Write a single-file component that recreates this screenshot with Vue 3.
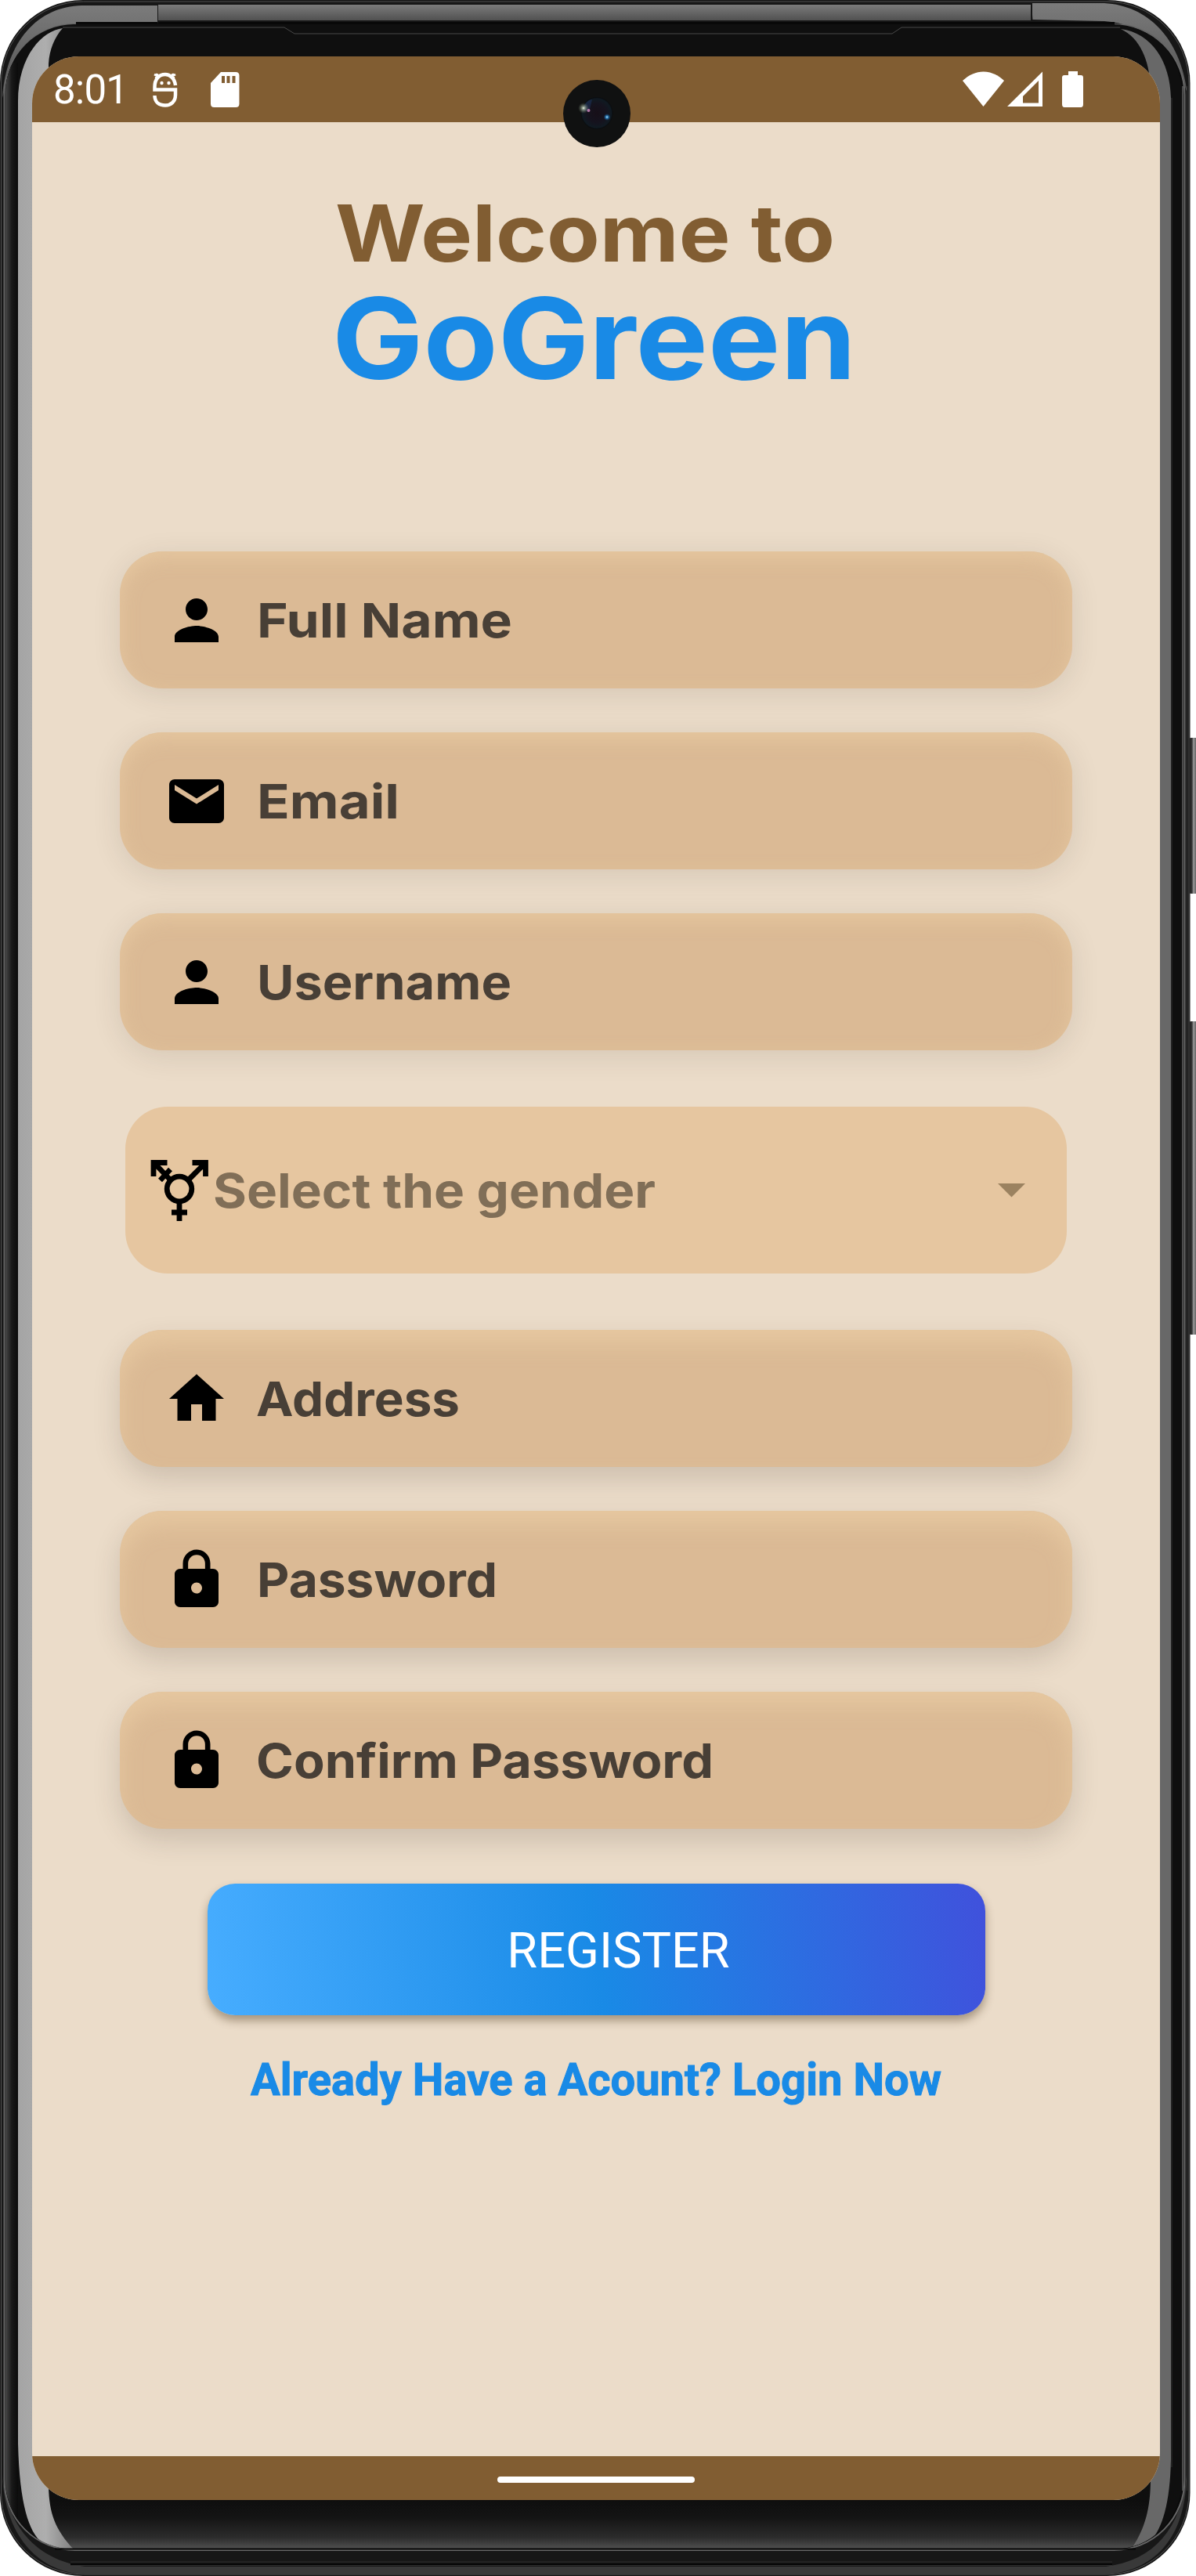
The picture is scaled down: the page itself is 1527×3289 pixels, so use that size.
<script setup>
const icons = {
  person: 'M12 12c2.21 0 4-1.79 4-4s-1.79-4-4-4-4 1.79-4 4 1.79 4 4 4zm0 2c-2.67 0-8 1.34-8 4v2h16v-2c0-2.66-5.33-4-8-4z',
  email: 'M20 4H4c-1.1 0-1.99.9-1.99 2L2 18c0 1.1.9 2 2 2h16c1.1 0 2-.9 2-2V6c0-1.1-.9-2-2-2zm0 4l-8 5-8-5V6l8 5 8-5v2z',
  home: 'M10 20v-6h4v6h5v-8h3L12 3 2 12h3v8z',
  lock: 'M18 8h-1V6c0-2.76-2.24-5-5-5S7 3.24 7 6v2H6c-1.1 0-2 .9-2 2v10c0 1.1.9 2 2 2h12c1.1 0 2-.9 2-2V10c0-1.1-.9-2-2-2zm-6 9c-1.1 0-2-.9-2-2s.9-2 2-2 2 .9 2 2-.9 2-2 2zm3.1-9H8.9V6c0-1.71 1.39-3.1 3.1-3.1s3.1 1.39 3.1 3.1v2z'
}
const topFields = [
  { label: 'Full Name', icon: 'person', x: -1, length: 326, depth: 'low' },
  { label: 'Email', icon: 'email', x: -1, length: 182, depth: 'low' },
  { label: 'Username', icon: 'person', x: -1, length: 325, depth: 'low' }
]
const bottomFields = [
  { label: 'Address', icon: 'home', x: -2, length: 260, depth: 'high' },
  { label: 'Password', icon: 'lock', x: -1, length: 307, depth: 'high' },
  { label: 'Confirm Password', icon: 'lock', x: -2, length: 584, depth: 'high' }
]
</script>

<template>
  <main class="device">
    <svg class="frame" width="1527" height="3289" viewBox="0 0 1527 3289">
      <defs>
        <linearGradient id="rail" x1="0" y1="0" x2="0" y2="1">
          <stop offset="0" stop-color="#7b7b7b" /><stop offset="1" stop-color="#515151" />
        </linearGradient>
        <linearGradient id="chin" x1="0" y1="0" x2="0" y2="1">
          <stop offset="0" stop-color="#0e0e0e" /><stop offset=".35" stop-color="#141414" />
          <stop offset=".75" stop-color="#2c2c2c" /><stop offset="1" stop-color="#555" />
        </linearGradient>
        <linearGradient id="edgeLeft" x1="0" y1="0" x2="1" y2="0">
          <stop offset="0" stop-color="#484848" /><stop offset=".5" stop-color="#181818" /><stop offset="1" stop-color="#0b0b0b" />
        </linearGradient>
        <linearGradient id="shineLeft" x1="0" y1="0" x2="1" y2="0">
          <stop offset="0" stop-color="#a4a4a4" /><stop offset=".5" stop-color="#aeaeae" /><stop offset="1" stop-color="#808080" />
        </linearGradient>
        <linearGradient id="key" x1="0" y1="0" x2="1" y2="0">
          <stop offset="0" stop-color="#222" /><stop offset=".35" stop-color="#333" />
          <stop offset=".48" stop-color="#999" /><stop offset=".75" stop-color="#5c5c5c" />
        </linearGradient>
        <clipPath id="glass"><rect x="7" y="31" width="1502" height="3224" rx="88" /></clipPath>
      </defs>
      <rect x="1517" y="942" width="14" height="199" rx="4" fill="url(#key)" />
      <rect x="1517" y="1304" width="14" height="400" rx="4" fill="url(#key)" />
      <rect width="1519.500" height="3289" rx="106" fill="#171717" />
      <rect x="1.500" y="2" width="1516.500" height="3285" rx="105" fill="none" stroke="#505050" />
      <path d="M108 3277H1412C1474 3269 1508 3228 1515 3160C1514 3243 1472 3283 1411 3287H108C45 3283 6 3234 3 3160C9 3225 46 3268 108 3277Z" fill="#393939" />
      <path d="M90 3271H1420M90 3275.500H1420" fill="none" stroke="#303030" />
      <path d="M90 3274H1420" fill="none" stroke="#070707" stroke-width="2" />
      <path d="M201 7H105C48 8 8 53 3 125C20 65 52 33 105 29L201 29Z" fill="url(#rail)" />
      <rect x="202" y="6" width="1114" height="20" fill="url(#rail)" />
      <path d="M1318 4H1410C1465 7 1507 48 1516 119C1498 64 1460 30 1410 27L1318 25Z" fill="url(#rail)" />
      <rect x="5.500" y="31" width="1507" height="3225" rx="90" fill="#0b0b0b" stroke="#666" stroke-width="2" />
      <path d="M97 30.500H1423" stroke="#080808" stroke-width="5" />
      <g clip-path="url(#glass)">
        <rect x="7" y="31" width="1502" height="3224" fill="#0f0f0f" />
        <rect x="55" y="3192" width="1420" height="64" fill="url(#chin)" />
        <rect x="7" y="80" width="16" height="3140" fill="url(#edgeLeft)" />
        <path d="M80 36C55 39 23 70 23 130V3120C25 3198 37 3232 53 3246C65 3253 80 3255 94 3255C70 3229 63 3209 62 3175V82C63 63 70 47 80 36Z" fill="url(#shineLeft)" />
        <path d="M1431 37C1470 42 1494 78 1495 125V3140C1494 3195 1484 3230 1468 3245L1446 3252C1462 3228 1469 3202 1469 3165V110C1467 77 1456 49 1431 37Z" fill="#686868" />
      </g>
      <path d="M376 43L363 35H80M376 43H1139L1151 35H1430" fill="none" stroke="#484848" />
      <path d="M1496 125V3150M1515.500 110V3180" stroke="#353535" />
      <path d="M1510 110V3180" stroke="#4b4b4b" stroke-width="2" />
      <path d="M201.500 7V30M1316.500 4L1318 26" stroke="#171717" />
      <path d="M70 3254.500H1450" stroke="#070707" stroke-width="2" />
    </svg>

    <section class="screen">
      <header class="status">
        <div class="status-left">
          <span class="clock">8:01</span>
          <svg class="bug" width="32" height="46" viewBox="0 0 32 46" fill="none" stroke="#fff" stroke-width="4.500">
            <path d="M29 17C28 8 22 3 16 3C8 3 2.500 9 2.500 19V22.500H29V29C29 38 23 42.500 16 42.500C8 42.500 2.500 38 2.500 30" />
            <path d="M8 6L2 3M4 8L6 2M23 6L29 3M27 8L25 2" stroke-width="3" />
            <circle cx="11.500" cy="14" r="2.200" fill="#fff" stroke="none" /><circle cx="20.500" cy="14" r="2.200" fill="#fff" stroke="none" />
          </svg>
          <svg class="sd" width="37" height="45" viewBox="0 0 37 45">
            <path fill="#fff" fill-rule="evenodd" d="M13 0H32Q36.500 0 36.500 4.500V40.500Q36.500 45 32 45H4.500Q0 45 0 40.500V14ZM14 5V14H18V5ZM20.500 5V14H24.500V5ZM27.500 5V14H31.500V5Z" />
          </svg>
        </div>
        <svg class="signals" width="155" height="46" viewBox="0 0 155 46" fill="#fff">
          <path d="M0 12C16-3.500 37-3.500 53 12L26.500 45Z" />
          <path fill-rule="evenodd" d="M57 45L102 .5V45ZM77 40.500H97V12L77 32Z" />
          <path d="M135 0H147V5H151Q154 5 154 8V42Q154 46 151 46H130Q127 46 127 42V8Q127 5 130 5H135Z" />
        </svg>
      </header>

      <svg class="camera" width="88" height="88" viewBox="0 0 88 88">
        <defs>
          <radialGradient id="lens"><stop offset="0" stop-color="#170f18" /><stop offset=".6" stop-color="#15131e" /><stop offset=".9" stop-color="#101a22" /><stop offset="1" stop-color="#090a0c" /></radialGradient>
          <radialGradient id="flare"><stop offset="0" stop-color="#f4ffe9" /><stop offset=".25" stop-color="#aab7a5" stop-opacity=".8" /><stop offset="1" stop-color="#56634f" stop-opacity="0" /></radialGradient>
          <radialGradient id="blue"><stop offset="0" stop-color="#b6e9ff" /><stop offset=".4" stop-color="#2773ad" /><stop offset="1" stop-color="#153e6c" stop-opacity="0" /></radialGradient>
        </defs>
        <circle cx="44" cy="44" r="43" fill="#101111" />
        <circle cx="44" cy="43.500" r="20.500" fill="url(#lens)" />
        <path d="M26 39C28 30 34 26 38 26L34 42Z" fill="#263d74" opacity=".4" />
        <circle cx="27" cy="37" r="7" fill="url(#flare)" />
        <circle cx="33.500" cy="40" r="2" fill="#b276a6" />
        <circle cx="57" cy="48.500" r="4.500" fill="url(#blue)" />
      </svg>

      <div class="content">
        <h1 class="title">
          <svg width="660" height="118" viewBox="0 0 660 118"><text class="welcome" x="-5" y="112" textLength="638" lengthAdjust="spacingAndGlyphs">Welcome to</text></svg>
          <svg width="660" height="150" viewBox="0 0 660 150"><text class="brand" x="-9" y="144" textLength="669" lengthAdjust="spacingAndGlyphs">GoGreen</text></svg>
        </h1>

        <form class="form" @submit.prevent>
          <div v-for="field in topFields" :key="field.label" class="field" :class="field.depth">
            <svg width="84" height="84" viewBox="0 0 24 24"><path :d="icons[field.icon]" /></svg>
            <svg width="640" height="84" viewBox="0 0 640 84"><text class="label" :x="field.x" y="64" :textLength="field.length" lengthAdjust="spacingAndGlyphs">{{ field.label }}</text></svg>
          </div>

          <div class="select">
            <svg width="76" height="80" viewBox="0 0 76 80" fill="none" stroke="#000" stroke-width="6.800">
              <circle cx="38" cy="38" r="15.800" />
              <path d="M38 54V79M28 68H48M50 26L71 5M54.500 4.500H71.500V22M27 27L6 5M22.500 4.500H5V22M26.500 13L13.500 27" />
            </svg>
            <svg width="640" height="84" viewBox="0 0 640 84"><text class="label hint" x="1" y="64" textLength="565" lengthAdjust="spacingAndGlyphs">Select the gender</text></svg>
            <svg class="arrow" width="35" height="18" viewBox="0 0 35 18"><path d="M0 0H35L17.500 17.500Z" fill="#9b8260" /></svg>
          </div>

          <div v-for="field in bottomFields" :key="field.label" class="field" :class="field.depth">
            <svg width="84" height="84" viewBox="0 0 24 24"><path :d="icons[field.icon]" /></svg>
            <svg width="640" height="84" viewBox="0 0 640 84"><text class="label" :x="field.x" y="64" :textLength="field.length" lengthAdjust="spacingAndGlyphs">{{ field.label }}</text></svg>
          </div>

          <button class="register" type="submit">REGISTER</button>
        </form>
        <svg class="login" width="884" height="76" viewBox="0 0 884 76"><text x="1" y="56" textLength="882" lengthAdjust="spacingAndGlyphs">Already Have a Acount? Login Now</text></svg>
      </div>

      <footer class="nav"><span class="handle"></span></footer>
    </section>
  </main>
</template>

<style>
html, body { background: #fff; }
</style>

<style scoped>
.device { width: 1527px; height: 3289px; display: grid; overflow: hidden; }
.frame, .screen { grid-area: 1 / 1; }
.frame, .screen svg { display: block; }
.screen {
  position: relative;
  margin: 72px 0 0 41px;
  width: 1440px;
  height: 3120px;
  border-radius: 60px;
  overflow: hidden;
  display: flex;
  flex-direction: column;
  background: #ebdcc9;
  font-family: Roboto, "Liberation Sans", sans-serif;
}
.screen svg { overflow: visible; flex: none; }
.status {
  height: 84px;
  flex: none;
  box-sizing: border-box;
  padding: 0 97px 0 27px;
  display: flex;
  justify-content: space-between;
  background: #815d32;
  color: #fff;
}
.status-left { display: flex; align-items: flex-start; }
.clock { width: 99px; font-size: 51px; line-height: 86px; letter-spacing: -.8px; white-space: nowrap; }
.bug { margin: 20px 0 0 28px; }
.sd { margin: 20px 0 0 42px; }
.signals { margin-top: 19px; }
.camera { position: absolute; left: 677px; top: 29px; }
.content { flex: 1; display: flex; flex-direction: column; align-items: center; }
.title { margin: 66px 0 0 6px; width: 662px; height: 262px; }
.welcome { font: 700 101px Inter, "Liberation Sans", sans-serif; fill: #815d32; }
.brand { font: 700 144px Inter, "Liberation Sans", sans-serif; fill: #198ae6; }
.form { display: flex; flex-direction: column; align-items: center; margin-top: 220px; gap: 56px; }
.field {
  box-sizing: border-box;
  width: 1216px;
  height: 175px;
  padding-left: 56px;
  display: flex;
  align-items: center;
  gap: 36px;
  border-radius: 55px;
  background: #dbba95;
}
.low { box-shadow: 0 7px 36px rgba(60, 50, 40, .12), inset 0 8px 24px rgba(232, 202, 163, .8); }
.high { box-shadow: 0 15px 34px rgba(60, 50, 40, .17), inset 0 18px 28px rgba(232, 202, 163, .8); }
.label { font: 700 61px Inter, "Liberation Sans", sans-serif; fill: #483f36; }
.label.hint { fill: #806e57; }
.select {
  box-sizing: border-box;
  width: 1202px;
  height: 213px;
  margin: 16px 0;
  padding: 0 53px 0 31px;
  display: flex;
  align-items: center;
  border-radius: 54px;
  background: #e6c6a0;
}
.select > svg:nth-child(2) { margin-left: 4px; }
.arrow { margin-left: auto; }
.register {
  width: 993px;
  height: 168px;
  margin: 14px 0 0 0;
  padding: 3px 0 0 57px;
  border: 0;
  border-radius: 35px;
  background: linear-gradient(82.5deg, #47adff, #198ae6 50%, #4051dc);
  box-shadow: 0 7px 12px rgba(70, 50, 25, .42);
  color: #fff;
  font: 400 63px Roboto, "Liberation Sans", sans-serif;
}
.login { margin-top: 46px; }
.login text { font: 700 57px Roboto, "Liberation Sans", sans-serif; fill: #198ae6; stroke: #198ae6; stroke-width: 1px; }
.nav { flex: none; height: 56px; box-sizing: border-box; padding-top: 4px; display: flex; justify-content: center; align-items: center; background: #815d32; }
.handle { width: 252px; height: 8px; border-radius: 4px; background: #fff; }
</style>
